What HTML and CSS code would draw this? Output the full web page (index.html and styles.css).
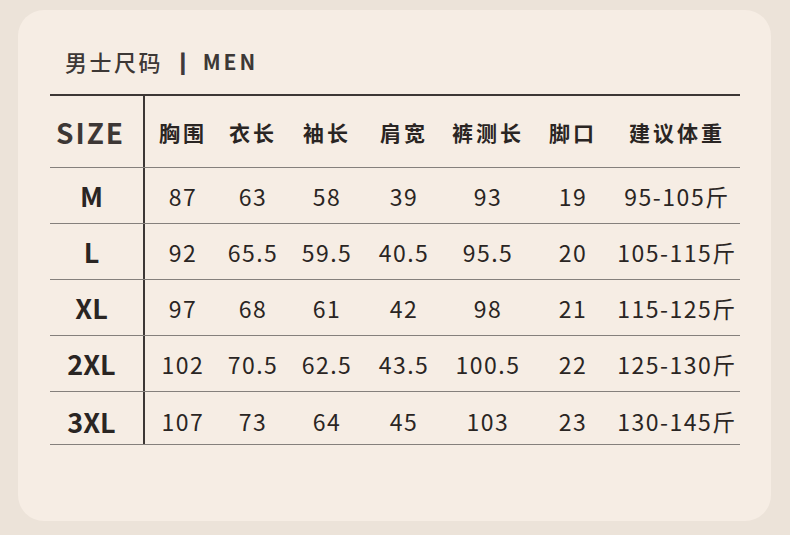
FILE: index.html
```html
<!DOCTYPE html>
<html lang="zh">
<head>
<meta charset="utf-8">
<link rel="stylesheet" href="styles.css">
</head>
<body>
<div class="card">
  <div class="title"><span class="cn">男士尺码</span><span class="bar">|</span><span class="en">MEN</span></div>
  <div class="table">
    <div class="row head">
      <div class="size">SIZE</div>
      <div>胸围</div><div>衣长</div><div>袖长</div><div>肩宽</div><div>裤测长</div><div>脚口</div><div class="last">建议体重</div>
    </div>
    <div class="row">
      <div class="size">M</div>
      <div>87</div><div>63</div><div>58</div><div>39</div><div>93</div><div>19</div><div class="last">95-105斤</div>
    </div>
    <div class="row">
      <div class="size">L</div>
      <div>92</div><div>65.5</div><div>59.5</div><div>40.5</div><div>95.5</div><div>20</div><div class="last">105-115斤</div>
    </div>
    <div class="row">
      <div class="size">XL</div>
      <div>97</div><div>68</div><div>61</div><div>42</div><div>98</div><div>21</div><div class="last">115-125斤</div>
    </div>
    <div class="row">
      <div class="size">2XL</div>
      <div>102</div><div>70.5</div><div>62.5</div><div>43.5</div><div>100.5</div><div>22</div><div class="last">125-130斤</div>
    </div>
    <div class="row end">
      <div class="size">3XL</div>
      <div>107</div><div>73</div><div>64</div><div>45</div><div>103</div><div>23</div><div class="last">130-145斤</div>
    </div>
  </div>
</div>
</body>
</html>
```
FILE: styles.css
```css
* { box-sizing: border-box; }
html, body { margin: 0; padding: 0; }
body {
  background: #ece3d9;
  width: 790px;
  height: 535px;
  overflow: hidden;
  font-family: "Noto Sans CJK SC", "Noto Sans", sans-serif;
  color: #2a2523;
}
.card {
  margin: 10px 0 0 18px;
  width: 753px;
  height: 511px;
  background: #f6ede4;
  border-radius: 26px;
  padding: 36px 0 0 32px;
}
.title {
  height: 30px;
  display: flex;
  align-items: center;
  color: #3d3836;
  font-size: 22px;
  line-height: 30px;
}
.title .cn { letter-spacing: 2.5px; margin-left: 15px; font-weight: 500; }
.title .bar {
  font-family: "DejaVu Sans", sans-serif;
  font-weight: 700;
  font-size: 21px;
  -webkit-text-stroke: 1px #3d3836;
  margin: 2px 16px 0 16px;
}
.title .en { font-weight: 700; font-size: 21px; letter-spacing: 3px; }
.table {
  margin-top: 18px;
  width: 690px;
  border-top: 2px solid #3d3735;
}
.row {
  display: grid;
  grid-template-columns: 95px 76px 64px 84px 70px 98px 72px 131px;
  height: 56px;
  border-bottom: 1px solid #85807c;
  align-items: center;
  font-size: 23px;
  letter-spacing: 1.5px;
}
.row > div {
  text-align: center;
  height: 100%;
  display: flex;
  align-items: center;
  justify-content: center;
  white-space: nowrap;
}
.row > .last { padding-left: 5px; }
.row > .size {
  border-right: 2px solid #3d3735;
  font-weight: 700;
  font-size: 27px;
  letter-spacing: 0;
  padding-right: 10px;
}
.row.head { height: 72px; }
.row.head > div {
  font-size: 21px;
  font-weight: 700;
  letter-spacing: 3px;
}
.row.head > .size {
  font-size: 28px;
  letter-spacing: 2px;
  color: #3d3735;
  padding-right: 12px;
}
.row.end { height: 53px; }
.row.end > div { padding-top: 6px; }
.row.end > .last { padding-left: 5px; }
```
